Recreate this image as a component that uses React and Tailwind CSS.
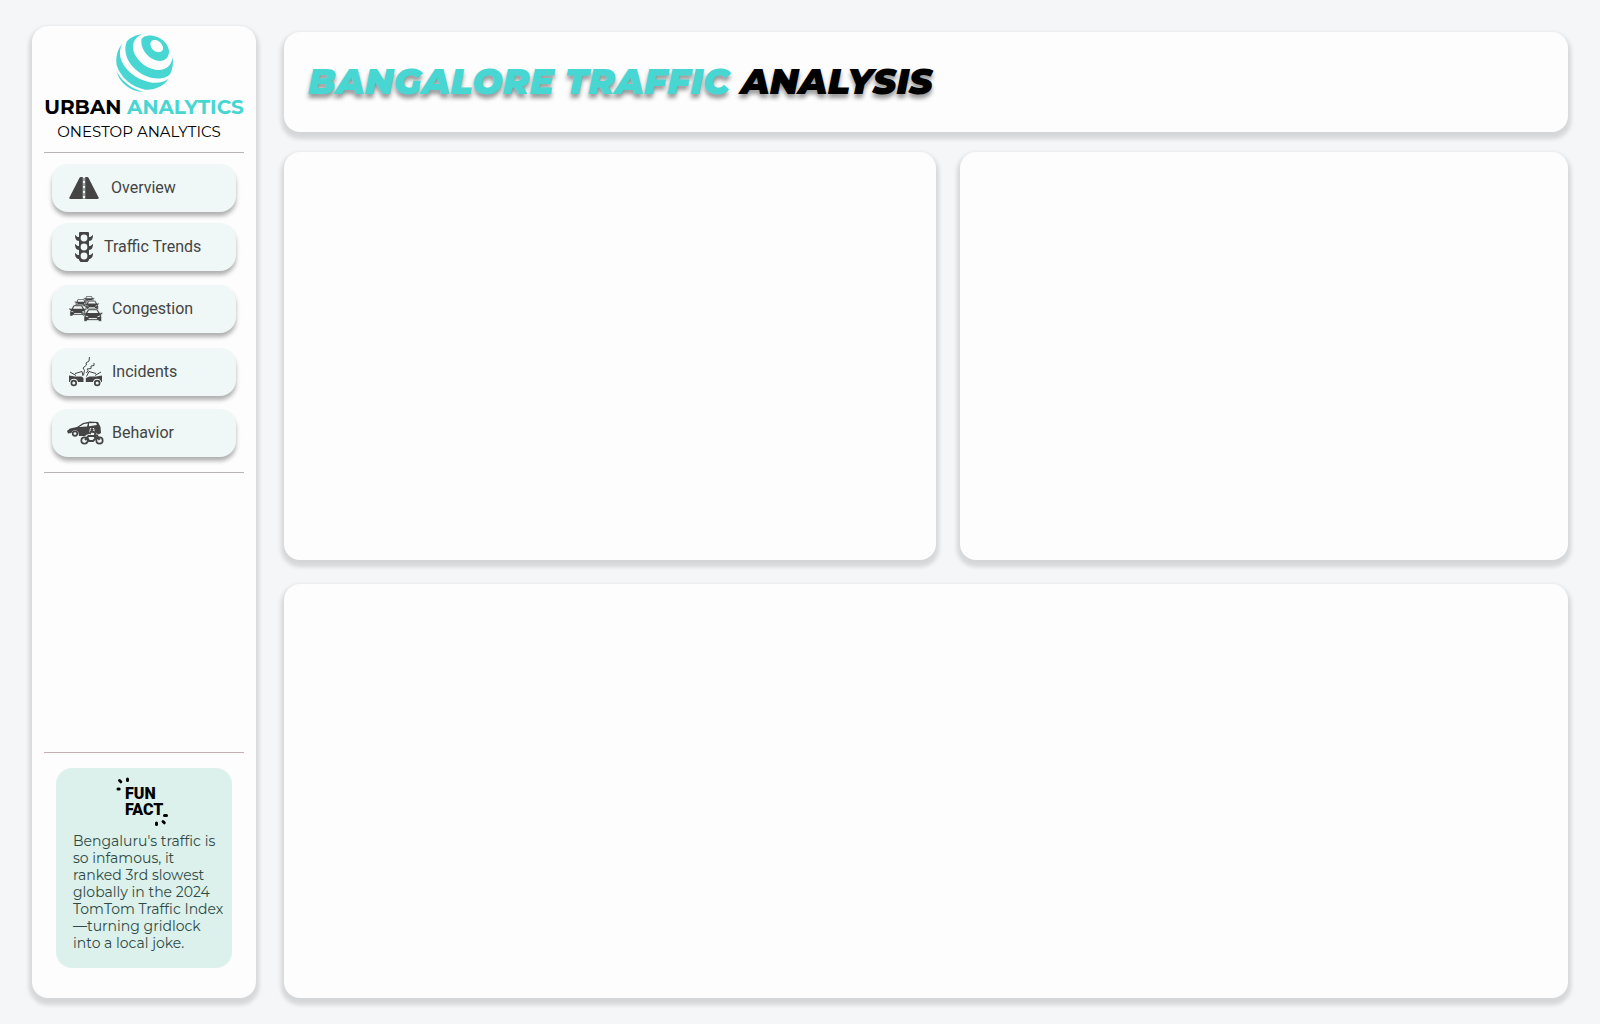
import React from "react";

function Globe() {
  return (
    <svg viewBox="46 22 176 178" className="h-[60px] w-[60px]" fill="#48d6d2" aria-hidden="true">
      <path
        fillRule="evenodd"
        d="M126 48C124 34 141 28 160 30C184 34 204 51 208 73C210 91 198 105 181 105C154 104 127 78 126 48ZM153 55C153 68 165 79 177 79C189 79 193 71 189 60C184 48 172 42 163 43C156 44 153 48 153 55Z"
      />
      <path d="M128 26C112 27 94 35 83 47C76 63 77 86 90 108C110 139 144 157 176 157C195 157 206 151 212 143C219 128 222 111 219 93C216 117 201 131 178 132C150 132 121 113 107 86C96 62 101 38 128 26Z" />
      <path d="M70 54C56 69 49 93 53 118C63 152 98 184 137 190C162 193 193 181 207 158C193 169 172 172 151 168C111 161 74 131 64 95C61 79 63 65 70 54Z" />
      <path d="M53 137C61 170 95 197 134 197C102 190 71 169 53 137Z" />
    </svg>
  );
}

function RoadIcon() {
  return (
    <svg viewBox="0 0 30 22" className="h-[22px] w-[30px]" aria-hidden="true">
      <path d="M11.5 0H18.5L19.6 1L29.6 20.5Q30 22 28.5 22H1.5Q0 22 .4 20.5L10.4 1Z" fill="#444" />
      <path d="M15 0V22" stroke="#eff8f6" strokeWidth="2.4" />
      <path d="M15 1V22" stroke="#444" strokeWidth="1" strokeDasharray="3 2" />
    </svg>
  );
}

function SignalIcon() {
  return (
    <svg viewBox="0 0 18 30" className="h-[30px] w-[18px]" aria-hidden="true">
      <g fill="#444">
        <path d="M4 1Q4 0 5 0H13Q14 0 14 1V28L12.5 30H5.5L4 28Z" />
        <path d="M0 3C1 3 1 5 4 5V9C1 9 0 6 0 3ZM18 3C17 3 17 5 14 5V9C17 9 18 6 18 3ZM0 12C1 12 1 14 4 14V18C1 18 0 15 0 12ZM18 12C17 12 17 14 14 14V18C17 18 18 15 18 12ZM0 21C1 21 1 23 4 23V27C1 27 0 24 0 21ZM18 21C17 21 17 23 14 23V27C17 27 18 24 18 21Z" />
      </g>
      <g fill="#eff8f6">
        <circle cx="9" cy="6" r="3.4" />
        <circle cx="9" cy="15" r="3.4" />
        <circle cx="9" cy="24" r="3.4" />
      </g>
    </svg>
  );
}

function FrontCar({ x, y, s }) {
  return (
    <g transform={`translate(${x} ${y}) scale(${s})`}>
      <path
        d="M4.500 0H13.500L16 4L18.500 3.200V4.800L17 5.700L17.500 8V12H14.500V11H3.500V12H.5V8L1 5.700L-.5 4.800V3.200L2 4Z"
        fill="#444"
        stroke="#eff8f6"
        strokeWidth=".5"
      />
      <path d="M5.200 1.300H12.800L14.200 4H3.800Z" fill="#eff8f6" />
      <path d="M2 6.400L4.500 7.300V8L2 7.400ZM16 6.400L13.500 7.300V8L16 7.400Z" fill="#eff8f6" />
      <path d="M5 9.300H13" stroke="#eff8f6" strokeWidth="1" />
    </g>
  );
}

function CongestionIcon() {
  return (
    <svg viewBox="0 0 34 26" className="h-[26px] w-[34px]" aria-hidden="true">
      <FrontCar x={15} y={0} s={0.56} />
      <FrontCar x={6} y={3} s={0.66} />
      <FrontCar x={16} y={4.5} s={0.76} />
      <FrontCar x={0.5} y={9} s={0.92} />
      <FrontCar x={14.5} y={13} s={1.03} />
    </svg>
  );
}

function IncidentsIcon() {
  return (
    <svg viewBox="0 0 34 30" className="h-[30px] w-[34px]" fill="none" stroke="#444" aria-hidden="true">
      <path d="M0 18.500L6 19.500H12.500L14.500 21V25H9A4.200 4.200 0 0 0 .8 25H0ZM33 18.500L27 19.500H20.500L16.800 21V25H24A4.200 4.200 0 0 1 32.200 25H33Z" fill="#444" stroke="none" />
      <path d="M1 15L7 18.500M6 16.500L13 14.500L14 19M32 15L26 18.500M27 16.500L20 14.500L17.500 19.500" strokeWidth="1" />
      <circle cx="4.800" cy="26" r="2.400" strokeWidth="1.700" />
      <circle cx="28.200" cy="26" r="2.400" strokeWidth="1.700" />
      <path d="M14.500 18L15.500 13.500L14 11L17.500 8L17 6L20 4L20.500 0M17.500 16L19 13.500L18 12L22 11.500L22 9L25 8.500L25 6" strokeWidth="1" />
    </svg>
  );
}

function BehaviorIcon() {
  return (
    <svg viewBox="0 0 37 24" className="h-[24px] w-[37px]" aria-hidden="true">
      <path d="M0 10L3 7.500L10 6L16 2L23 .5L31 1L33.500 6L34 12L29 15H12L11.500 12A3.600 3.600 0 0 0 4.500 12L1 12.500Z" fill="#444" />
      <path d="M12 6L17 3L21 2.400L20 5.500ZM22 2.200L29 2L30 4L22 5.300Z" fill="#eff8f6" />
      <circle cx="8" cy="12.600" r="2.300" fill="none" stroke="#444" strokeWidth="1.700" />
      <path d="M23 7L27 7L28 11L32 14L31 17L17 17L19 14L22 13Z" fill="#eff8f6" />
      <g fill="none" stroke="#444">
        <circle cx="17.500" cy="19.500" r="3.200" strokeWidth="1.700" />
        <circle cx="32.500" cy="19.500" r="3.200" strokeWidth="1.700" />
        <path d="M18 19L21.500 15L27 15L29 17L26 20H22L20 16M27 14L30 14.500L32.500 19" strokeWidth="2" />
        <path d="M22.500 13L24 10.500L27 11L29 13" strokeWidth="2" />
      </g>
      <circle cx="25" cy="8.500" r="1.500" fill="#444" />
    </svg>
  );
}

const items = [
  { label: "Overview", icon: <RoadIcon />, pad: "pl-[17px] gap-[12px]", space: "" },
  { label: "Traffic Trends", icon: <SignalIcon />, pad: "pl-[23px] gap-[11px]", space: "mt-[11px]" },
  { label: "Congestion", icon: <CongestionIcon />, pad: "pl-[17px] gap-[9px]", space: "mt-[14px]" },
  { label: "Incidents", icon: <IncidentsIcon />, pad: "pl-[17px] gap-[9px]", space: "mt-[15px]" },
  { label: "Behavior", icon: <BehaviorIcon />, pad: "pl-[15px] gap-[8px]", space: "mt-[13px]" },
];

function FunFactBadge() {
  return (
    <div className="flex w-[54px] flex-col">
      <svg viewBox="0 0 54 8" className="h-[8px] w-[54px] overflow-visible" stroke="#000" strokeWidth="3" strokeLinecap="round" aria-hidden="true">
        <path d="M3.500 2.500L4.800 3.800M11.500 1V2.500M2 11H3.200" />
      </svg>
      <h2 className="flex flex-col pl-[9px] font-['Roboto',sans-serif] text-[16px] font-black leading-[16px] text-black">
        <span>FUN</span>
        <span>FACT</span>
      </h2>
      <svg viewBox="0 0 54 12" className="-mt-[4px] h-[12px] w-[54px]" stroke="#000" strokeWidth="3" strokeLinecap="round" aria-hidden="true">
        <path d="M48.500 1.500H50.500M47 7.500L48.300 8.800M40.500 9V10.500" />
      </svg>
    </div>
  );
}

const card = "rounded-2xl bg-[#fdfdfd] shadow-[0_4px_4px_3px_rgba(0,0,0,0.13)]";

export default function App() {
  return (
    <div className="flex min-h-screen gap-7 bg-[#f4f6f8] px-8 py-[26px] font-['Montserrat','Inter',sans-serif]">
      <aside className={`flex w-56 shrink-0 flex-col px-3 ${card}`}>
        <div className="flex flex-col items-center border-b border-[#b9b4b4] pb-[9px] pt-[7px]">
          <Globe />
          <p className="mt-px whitespace-nowrap text-[20px] font-bold leading-[26px] text-black">
            URBAN <span className="text-[#48d6d2]">ANALYTICS</span>
          </p>
          <p className="mr-[10px] mt-px whitespace-nowrap text-[15px] leading-[22px] text-black">ONESTOP ANALYTICS</p>
        </div>
        <nav className="flex flex-col border-b border-[#b9b4b4] px-2 pb-[15px] pt-[11px]">
          {items.map((it) => (
            <button
              key={it.label}
              type="button"
              className={`flex h-12 items-center rounded-2xl bg-[#eff8f6] text-left font-['Roboto',sans-serif] text-[16px] text-[#444] shadow-[0_4px_4px_rgba(0,0,0,0.3)] ${it.pad} ${it.space}`}
            >
              {it.icon}
              <span>{it.label}</span>
            </button>
          ))}
        </nav>
        <div className="mt-auto border-t border-[#c4b0b2] px-3 pb-[30px] pt-[15px]">
          <section className="flex flex-col rounded-2xl bg-[#dcf1eb] pb-[16px] pl-[17px] pt-[10px]">
            <div className="pl-[43px]">
              <FunFactBadge />
            </div>
            <p className="mt-[7px] whitespace-nowrap text-[14px] leading-[17px] text-[#2f4a46]">
              Bengaluru's traffic is
              <br />
              so infamous, it
              <br />
              ranked 3rd slowest
              <br />
              globally in the 2024
              <br />
              TomTom Traffic Index
              <br />
              —turning gridlock
              <br />
              into a local joke.
            </p>
          </section>
        </div>
      </aside>
      <main className="flex min-w-0 flex-1 flex-col pt-[6px]">
        <header className={`flex h-[100px] items-center px-6 pb-[3px] ${card}`}>
          <h1 className="whitespace-nowrap text-[36px] font-black italic leading-[44px] text-black [text-shadow:0_4px_4px_rgba(0,0,0,0.4)]">
            <span className="text-[#48d6d2]">BANGALORE TRAFFIC</span> ANALYSIS
          </h1>
        </header>
        <div className="mt-5 flex flex-1 gap-6">
          <section className={`flex-[652] ${card}`} />
          <section className={`flex-[608] ${card}`} />
        </div>
        <section className={`mt-6 h-[414px] ${card}`} />
      </main>
    </div>
  );
}
